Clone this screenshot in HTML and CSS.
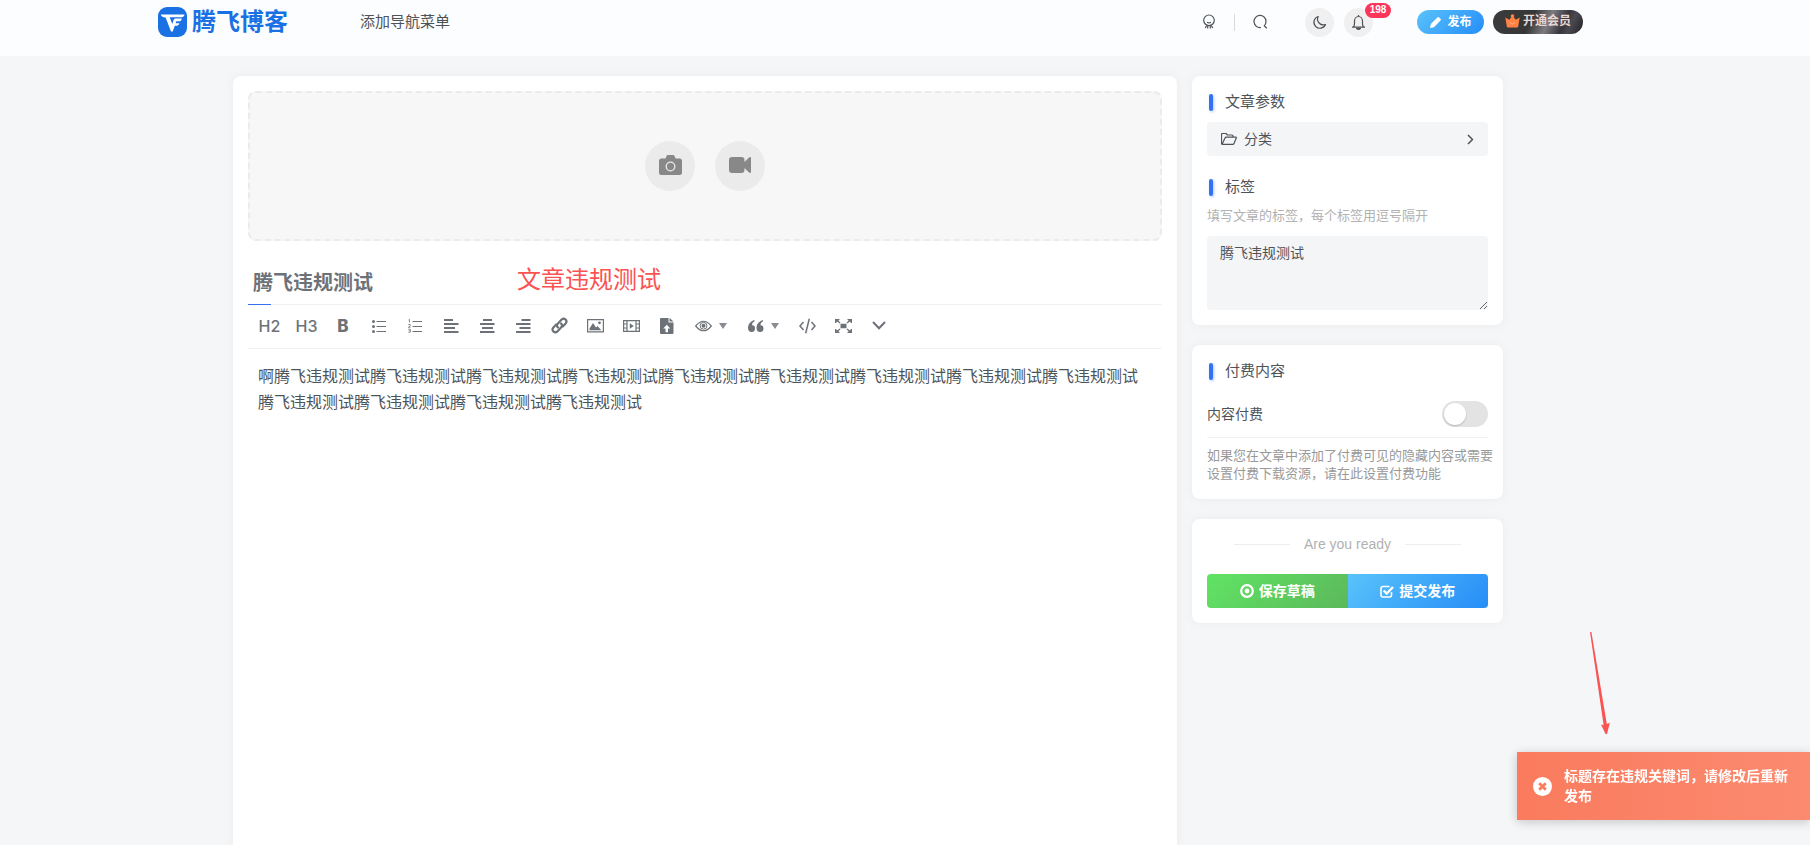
FILE: index.html
```html
<!DOCTYPE html>
<html lang="zh-CN">
<head>
<meta charset="utf-8">
<title>腾飞博客</title>
<link rel="stylesheet" href="styles.css">
</head>
<body>
<header class="header">
  <div class="header-inner">
    <a class="logo" href="#">
      <svg width="29" height="30" viewBox="0 0 29 30"><rect width="29" height="30" rx="9" fill="#1a71e4"/><path d="M2.800 7.500H26.500Q26 10.300 23.500 10.300H11.700L14.300 17 15.600 13Q16.200 11.600 17.700 11.600H24Q23.300 14.300 21.300 14.300H18.300L17.600 16.300H21.500Q20.800 18.700 19 18.700H16.800L14.700 24.500H13L7.600 10.600Q3.500 10.300 2.800 7.500z" fill="#fff"/></svg>
      <span>腾飞博客</span>
    </a>
    <nav class="nav"><a href="#">添加导航菜单</a></nav>
    <div class="tools">
      <button class="plain" aria-label="主题"><svg width="14" height="16" viewBox="0 0 14 16" class="line"><circle cx="7" cy="6.300" r="5.300"/><path d="M5 8.200q2 1.200 4 0M4.600 11.500L3.300 14M5.700 12v2.500M8.300 12v2.500M9.400 11.500l1.300 2.500"/></svg></button>
      <span class="sep"></span>
      <button class="plain" aria-label="搜索"><svg width="15" height="16" viewBox="0 0 15 16" class="line"><path d="M8 13.500A6 6.100 0 1 1 13 7.400q0 2.500-1.800 4.400l2.600 2.500"/></svg></button>
      <button class="round moon" aria-label="夜间模式"><svg width="15" height="15" viewBox="0 0 15 15" class="line"><path d="M6.200 1.500A6 6 0 1 0 13.500 9.500 5.800 5.800 0 0 1 6.200 1.500z"/></svg></button>
      <button class="round bell" aria-label="消息"><svg width="15" height="17" viewBox="0 0 15 17" class="line"><path d="M1 13.200h13M2.500 13q1-1.500 1-3.500V7a4 4.500 0 0 1 8 0v2.500q0 2 1 3.500M7.500 1v1.500"/><path d="M5.500 14.300q2 2.400 4 0z" fill="#4e5358"/></svg><span class="badge">198</span></button>
      <button class="pill publish"><svg width="13" height="13" viewBox="0 0 13 13"><path d="M8.300 1.400q1-.9 1.900 0l1.300 1.300q.9 1 0 1.900L4.900 11.200 1 12l.8-3.900z" fill="#fff"/></svg>发布</button>
      <button class="pill vip"><svg width="15" height="15" viewBox="0 0 15 15"><path d="M.3 3.500l3.900 2.200L6.300 3.200A1.700 1.700 0 1 1 8.700 3.200l2.100 2.500 3.900-2.200-1.500 9q-.1.900-1 .9H2.800q-.9 0-1-.9z" fill="#ff8143"/><path d="M5 8.500q2.500 2.800 5 0" fill="none" stroke="#ffb083"/></svg>开通会员</button>
    </div>
  </div>
</header>

<main class="page">
  <section class="card editor">
    <div class="upload">
      <button class="upload-btn" aria-label="上传图片"><svg width="23" height="20" viewBox="0 0 23 20"><path d="M2.500 3.500h4L7.500 1q.3-1 1.500-1h5q1.200 0 1.500 1l1 2.500h4Q23 3.500 23 6v11.500q0 2.500-2.500 2.500h-18Q0 20 0 17.500V6q0-2.500 2.500-2.500z" fill="#888"/><circle cx="11.500" cy="11.500" r="4.300" fill="#888" stroke="#ebebeb" stroke-width="1.300"/></svg></button>
      <button class="upload-btn" aria-label="上传视频"><svg width="22" height="16" viewBox="0 0 22 16"><path d="M3 0h9.500q3 0 3 3v2L20 .5q2-1 2 .5v14q0 1.500-2 .5L15.500 11v2q0 3-3 3H3q-3 0-3-3V3q0-3 3-3z" fill="#888"/></svg></button>
    </div>
    <div class="title-row">
      <input class="title-input" type="text" value="腾飞违规测试" aria-label="文章标题">
      <span class="note">文章违规测试</span>
    </div>
    <div class="toolbar">
      <button class="tb tb-h">H2</button>
      <button class="tb tb-h">H3</button>
      <button class="tb tb-b">B</button>
      <button class="tb" aria-label="无序列表"><svg width="14" height="14" viewBox="0 0 14 14"><path d="M4.500 2.500H14M4.500 7.500H14M4.500 12.500H14" stroke="#6d7278" stroke-width="1"/><circle cx="1.500" cy="2.500" r="1.500"/><circle cx="1.500" cy="7.500" r="1.500"/><circle cx="1.500" cy="12.500" r="1.500"/></svg></button>
      <button class="tb" aria-label="有序列表"><svg width="14" height="14" viewBox="0 0 14 14" fill="none" stroke="#6d7278"><path d="M4.500 2.500H14M4.500 7.500H14M4.500 12.500H14"/><path d="M.5 1L1.500.3V3.500M.3 5.500h2v1.300l-2 1.500h2.200M.3 10.200h2v3h-2M.8 11.700h1.500" stroke-width=".8"/></svg></button>
      <button class="tb" aria-label="左对齐"><svg width="15" height="14" viewBox="0 0 15 14"><path d="M0 0h9v2H0zM0 4h14.500v2H0zM0 8h11v2H0zM0 12h14.500v2H0z"/></svg></button>
      <button class="tb" aria-label="居中"><svg width="15" height="14" viewBox="0 0 15 14"><path d="M3 0h9v2H3zM0 4h14.500v2H0zM2 8h11v2H2zM0 12h14.500v2H0z"/></svg></button>
      <button class="tb" aria-label="右对齐"><svg width="15" height="14" viewBox="0 0 15 14"><path d="M5.500 0h9v2h-9zM0 4h14.500v2H0zM3.500 8h11v2h-11zM0 12h14.500v2H0z"/></svg></button>
      <button class="tb" aria-label="链接"><svg width="17" height="17" viewBox="0 0 17 17" fill="none" stroke="#6d7278" stroke-width="2.200" stroke-linecap="round"><path d="M7 10.500q-2-1.800-.2-3.800L10.600 2.600q2-1.900 4 0 1.800 2 0 4L11.800 9.500"/><path d="M10 6.500q2 1.800.2 3.800l-3.800 4.100q-2 1.900-4 0-1.800-2 0-4L5.200 7.500"/></svg></button>
      <button class="tb" aria-label="图片"><svg width="17" height="14" viewBox="0 0 17 14"><path d="M.6.600h15.800v12.300H.6z" fill="none" stroke="#6d7278" stroke-width="1.200"/><path d="M2.500 11.200V9.500L6 4l3 4.500 1.500-1.500 3.800 4.200z"/><circle cx="12.500" cy="3.800" r="1.400"/></svg></button>
      <button class="tb" aria-label="视频"><svg width="17" height="12" viewBox="0 0 17 12"><path d="M.6.600h15.800v10.800H.6zM4 .6v10.800M13 .6v10.800M.6 4H4M.6 8H4M13 4h3.500M13 8h3.500" fill="none" stroke="#6d7278" stroke-width="1.200"/><path d="M6.800 3.300l4 2.700-4 2.700z"/></svg></button>
      <button class="tb" aria-label="附件"><svg width="14" height="16" viewBox="0 0 14 16"><path d="M1 0h7.500v4.500H13.500V15q0 1-1 1H1q-1 0-1-1V1Q0 0 1 0z"/><path d="M9.500 0l4 3.500h-4z"/><path d="M6.800 6.700l3.500 3.800H8v3.700H5.500v-3.700H3.200z" fill="#fff"/></svg></button>
      <button class="tb tb-menu" aria-label="隐藏内容"><svg width="17" height="12" viewBox="0 0 17 12"><path d="M.7 6q7.800-9.500 15.600 0-7.800 9.500-15.600 0z" fill="none" stroke="#6d7278" stroke-width="1.200"/><circle cx="8.500" cy="5.800" r="3.400" fill="none" stroke="#6d7278"/><circle cx="8.500" cy="5.800" r="2"/></svg><i class="caret"></i></button>
      <button class="tb tb-menu" aria-label="引用"><svg width="16" height="12" viewBox="0 0 16 12"><path d="M6 0L6.800 1Q3.900 2.500 3.800 5.300 7 5 7 8.500 6.900 12 3.600 12 0 12 0 7.500 0 2.500 6 0zM14.500 0l.8 1q-2.900 1.500-3 4.300 3.200-.3 3.200 3.200-.1 3.500-3.400 3.500-3.600 0-3.600-4.500 0-5 6-7.500z"/></svg><i class="caret"></i></button>
      <button class="tb" aria-label="代码"><svg width="17" height="16" viewBox="0 0 17 16" fill="none" stroke="#6d7278" stroke-width="1.500"><path d="M4.500 4L1 8l3.500 4M12.500 4L16 8l-3.500 4M10.300.8L6.700 15.200"/></svg></button>
      <button class="tb" aria-label="全屏"><svg width="17" height="14" viewBox="0 0 17 14"><path d="M5.500 4.800h6v4.400h-6zM0 0h4.500v1L3.300 1.500 5.500 3.700l-.8.8L2 2.500 1 4H0zM17 0h-4.500v1l1.200.5-2.200 2.200.8.800L15 2.500 16 4h1zM0 14h4.500v-1l-1.200-.5 2.200-2.200-.8-.8L2 11.500 1 10H0zM17 14h-4.500v-1l1.200-.5-2.200-2.200.8-.8 2.700 2L16 10h1z"/></svg></button>
      <button class="tb" aria-label="更多"><svg width="14" height="9" viewBox="0 0 14 9" fill="none" stroke="#6d7278" stroke-width="2"><path d="M1 1l6 6.200L13 1"/></svg></button>
    </div>
    <div class="body-text" contenteditable="true">啊腾飞违规测试腾飞违规测试腾飞违规测试腾飞违规测试腾飞违规测试腾飞违规测试腾飞违规测试腾飞违规测试腾飞违规测试腾飞违规测试腾飞违规测试腾飞违规测试腾飞违规测试</div>
  </section>

  <aside class="side">
    <section class="card">
      <h2 class="heading">文章参数</h2>
      <button class="category"><svg width="16" height="12" viewBox="0 0 16 12" class="line"><path d="M2.800 11.300H1.500q-1 0-1-1V1.500q0-1 1-1H5L6.500 2H11q1 0 1 1v1.200M1.200 11L4 5q.3-.8 1.200-.8h9.600q.8 0 .5.800L13 10.400q-.4.900-1.300.9H1.500"/></svg><span>分类</span><svg width="7" height="11" viewBox="0 0 7 11" class="line thick"><path d="M1 1l4.500 4.500L1 10"/></svg></button>
      <h2 class="heading heading-tags"><label for="tags">标签</label></h2>
      <p class="hint hint-tags">填写文章的标签，每个标签用逗号隔开</p>
      <textarea class="tags" id="tags">腾飞违规测试</textarea>
    </section>
    <section class="card">
      <h2 class="heading">付费内容</h2>
      <div class="pay-row"><label for="pay">内容付费</label><input class="switch" id="pay" type="checkbox"></div>
      <p class="hint hint-pay">如果您在文章中添加了付费可见的隐藏内容或需要<br>设置付费下载资源，请在此设置付费功能</p>
    </section>
    <section class="card">
      <div class="ready">Are you ready</div>
      <div class="actions">
        <button class="act save"><svg width="14" height="14" viewBox="0 0 14 14"><circle cx="7" cy="7" r="5.800" fill="none" stroke="#fff" stroke-width="2.200"/><circle cx="7" cy="7" r="2.400" fill="#fff"/></svg>保存草稿</button>
        <button class="act submit"><svg width="14" height="13" viewBox="0 0 14 13" fill="none" stroke="#fff"><path d="M11.500 7v3q0 2-2 2H3q-2 0-2-2V3.500q0-2 2-2h6.500" stroke-width="1.600"/><path d="M3.700 5.500l3 3L13 2" stroke-width="2.400"/></svg>提交发布</button>
      </div>
    </section>
  </aside>
</main>

<svg class="arrow" width="30" height="104" viewBox="0 0 30 104"><path d="M5 0h1.400L21.800 92l3-1.200L22 102h-1.400L16 92.600l2.600.400z" fill="#fb5252"/></svg>

<div class="toast" role="alert">
  <svg width="19" height="19" viewBox="0 0 19 19"><circle cx="9.500" cy="9.500" r="9.500" fill="#fff"/><path d="M6.200 6.200l6.600 6.600M12.800 6.200l-6.600 6.600" stroke="#fa7d60" stroke-width="2.800"/></svg>
  <span>标题存在违规关键词，请修改后重新发布</span>
</div>
</body>
</html>
```
FILE: styles.css
```css
* { box-sizing: border-box; }
html, body { height: 100%; }
body {
  margin: 0;
  overflow: hidden;
  background: #f4f6f8;
  color: #4e5358;
  font-family: "Liberation Sans", "Noto Sans CJK SC", sans-serif;
  font-size: 14px;
  line-height: 20px;
}
a { color: inherit; text-decoration: none; }
button {
  border: 0;
  padding: 0;
  background: none;
  color: inherit;
  font: inherit;
  display: flex;
  align-items: center;
  justify-content: center;
}
svg { display: block; flex: none; }
.line { fill: none; stroke: #4e5358; stroke-width: 1.2; stroke-linejoin: round; }
.thick { stroke-width: 1.5; }

.header {
  height: 56px;
  background: #fcfdff;
  padding: 0 69px 12px 0;
}
.header-inner {
  max-width: 1425px;
  height: 44px;
  margin: 0 auto;
  display: flex;
  align-items: center;
}
.logo {
  display: flex;
  align-items: center;
  gap: 5px;
  color: #1a71e4;
  font-size: 24px;
  line-height: 30px;
  font-weight: bold;
}
.nav { margin-left: 72px; font-size: 15px; }
.tools { display: flex; align-items: center; margin-left: auto; }
.sep { width: 1px; height: 17px; margin: 0 18px; background: #d8d9db; }
.round {
  position: relative;
  width: 29px;
  height: 29px;
  border-radius: 50%;
  background: #f0f0f0;
}
.moon { margin-left: 37px; }
.bell { margin-left: 10px; }
.badge {
  position: absolute;
  left: 21px;
  top: -5px;
  width: 26px;
  height: 15px;
  border-radius: 8px;
  background: #fd355a;
  color: #fff;
  font-size: 10px;
  line-height: 14px;
  font-weight: bold;
  text-align: center;
}
.pill {
  height: 24px;
  border-radius: 12px;
  gap: 5px;
  color: #fff;
  font-size: 12px;
  font-weight: bold;
}
.publish {
  width: 67px;
  margin-left: 44px;
  background: linear-gradient(135deg, #59c3fb, #268df7);
}
.vip {
  width: 90px;
  margin-left: 9px;
  gap: 3px;
  padding-bottom: 2px;
  color: #e8d7d2;
  background: linear-gradient(115deg, #3c3c3c 0%, #363636 42%, #7d7b80 60%, #37363c 76%, #4a494f 84%, #222126 100%);
}

.page {
  max-width: 1344px;
  margin: 0 auto;
  padding: 20px 74px 0 0;
  display: flex;
  align-items: flex-start;
  gap: 15px;
}
.card {
  background: #fff;
  border-radius: 8px;
  padding: 15px;
  box-shadow: 0 0 10px rgba(116, 116, 116, 0.08);
}
.editor { flex: 1; min-width: 0; min-height: 100vh; }
.upload {
  height: 150px;
  border: 2px dashed #ebebeb;
  border-radius: 8px;
  background: #f7f7f7;
  display: flex;
  align-items: center;
  justify-content: center;
  gap: 20px;
}
.upload-btn { width: 50px; height: 50px; border-radius: 50%; background: #ebebeb; padding-bottom: 2px; }
.title-row {
  position: relative;
  margin-top: 20px;
  height: 44px;
  border-bottom: 1px solid #f2f2f3;
}
.title-row::after {
  content: "";
  position: absolute;
  left: 0;
  bottom: -1px;
  width: 23px;
  height: 1px;
  background: #3371f0;
}
.title-input {
  display: block;
  width: 100%;
  height: 41px;
  border: 0;
  padding: 0 5px;
  background: none;
  color: #6d7278;
  font: bold 20px "Liberation Sans", "Noto Sans CJK SC", sans-serif;
}
.note {
  position: absolute;
  left: 269px;
  top: 4px;
  color: #fb5252;
  font-size: 24px;
  line-height: 30px;
}
.toolbar {
  display: flex;
  flex-wrap: wrap;
  padding: 2px 3px 4px;
  border-bottom: 1px solid #f2f2f3;
}
.tb { width: 36px; height: 37px; fill: #6d7278; color: #6d7278; }
.tb-h { width: 37px; font-family: Inter, sans-serif; font-size: 16px; font-weight: 500; }
.tb-b { font-family: Inter, sans-serif; font-size: 17px; font-weight: 800; }
.tb-menu { width: 52px; gap: 7px; }
.caret { border: 4px solid transparent; border-top: 6px solid #888b90; border-bottom: 0; }
.body-text { padding: 15px 10px; font-size: 16px; line-height: 26px; outline: 0; }

.side {
  width: 311px;
  display: grid;
  grid-template-columns: minmax(0, 1fr);
  gap: 20px;
}
.heading {
  margin: 0;
  display: flex;
  align-items: center;
  gap: 12px;
  padding-left: 2px;
  height: 22px;
  font-size: 15px;
  font-weight: normal;
}
.heading::before {
  content: "";
  width: 4px;
  height: 17px;
  border-radius: 2px;
  background: #3371f0;
  box-shadow: 1px 1px 3px rgba(51, 113, 240, 0.4);
}
.heading-tags { margin-top: 20px; }
.category {
  width: 100%;
  height: 34px;
  margin-top: 9px;
  padding: 0 14px;
  gap: 7px;
  border-radius: 4px;
  background: #f4f5f7;
}
.category span { flex: 1; text-align: left; }
.hint { margin: 0; font-size: 13px; line-height: 18px; white-space: nowrap; }
.hint-tags { margin-top: 9px; color: #b1b1b1; }
.tags {
  display: block;
  width: 100%;
  height: 74px;
  margin-top: 11px;
  padding: 7px 13px;
  border: 0;
  border-radius: 4px;
  background: #f4f5f7;
  color: inherit;
  font: inherit;
  resize: vertical;
}
.pay-row {
  display: flex;
  align-items: center;
  justify-content: space-between;
  margin-top: 19px;
  padding-bottom: 10px;
  border-bottom: 1px solid #f2f2f3;
}
.switch {
  appearance: none;
  width: 46px;
  height: 26px;
  margin: 0;
  padding: 2px;
  border-radius: 13px;
  background: #e3e3e3;
}
.switch::before {
  content: "";
  display: block;
  width: 22px;
  height: 22px;
  border-radius: 50%;
  background: #fff;
  box-shadow: 0 1px 2px rgba(0, 0, 0, 0.2);
}
.switch:checked::before { margin-left: auto; }
.hint-pay { margin: 9px 0 1px; color: #999; }
.ready {
  display: flex;
  align-items: center;
  justify-content: center;
  gap: 14px;
  color: #b1b1b1;
}
.ready::before, .ready::after { content: ""; width: 56px; height: 1px; background: #eeeeef; }
.actions { display: flex; margin-top: 20px; border-radius: 4px; overflow: hidden; }
.act { flex: 1; height: 34px; gap: 5px; color: #fff; font-weight: bold; }
.save { background: linear-gradient(135deg, #60e464, #5cb85b); }
.submit { background: linear-gradient(135deg, #59c3fb, #268df7); }

.arrow { position: absolute; right: 195px; bottom: 109px; }
.toast {
  position: fixed;
  right: 0;
  bottom: 25px;
  width: 293px;
  padding: 14px 16px;
  display: flex;
  align-items: center;
  gap: 12px;
  background: linear-gradient(90deg, #fa7b5e, #fb8a6f);
  color: #fff;
  font-weight: bold;
  box-shadow: 0 2px 10px rgba(0, 0, 0, 0.2);
}
```
